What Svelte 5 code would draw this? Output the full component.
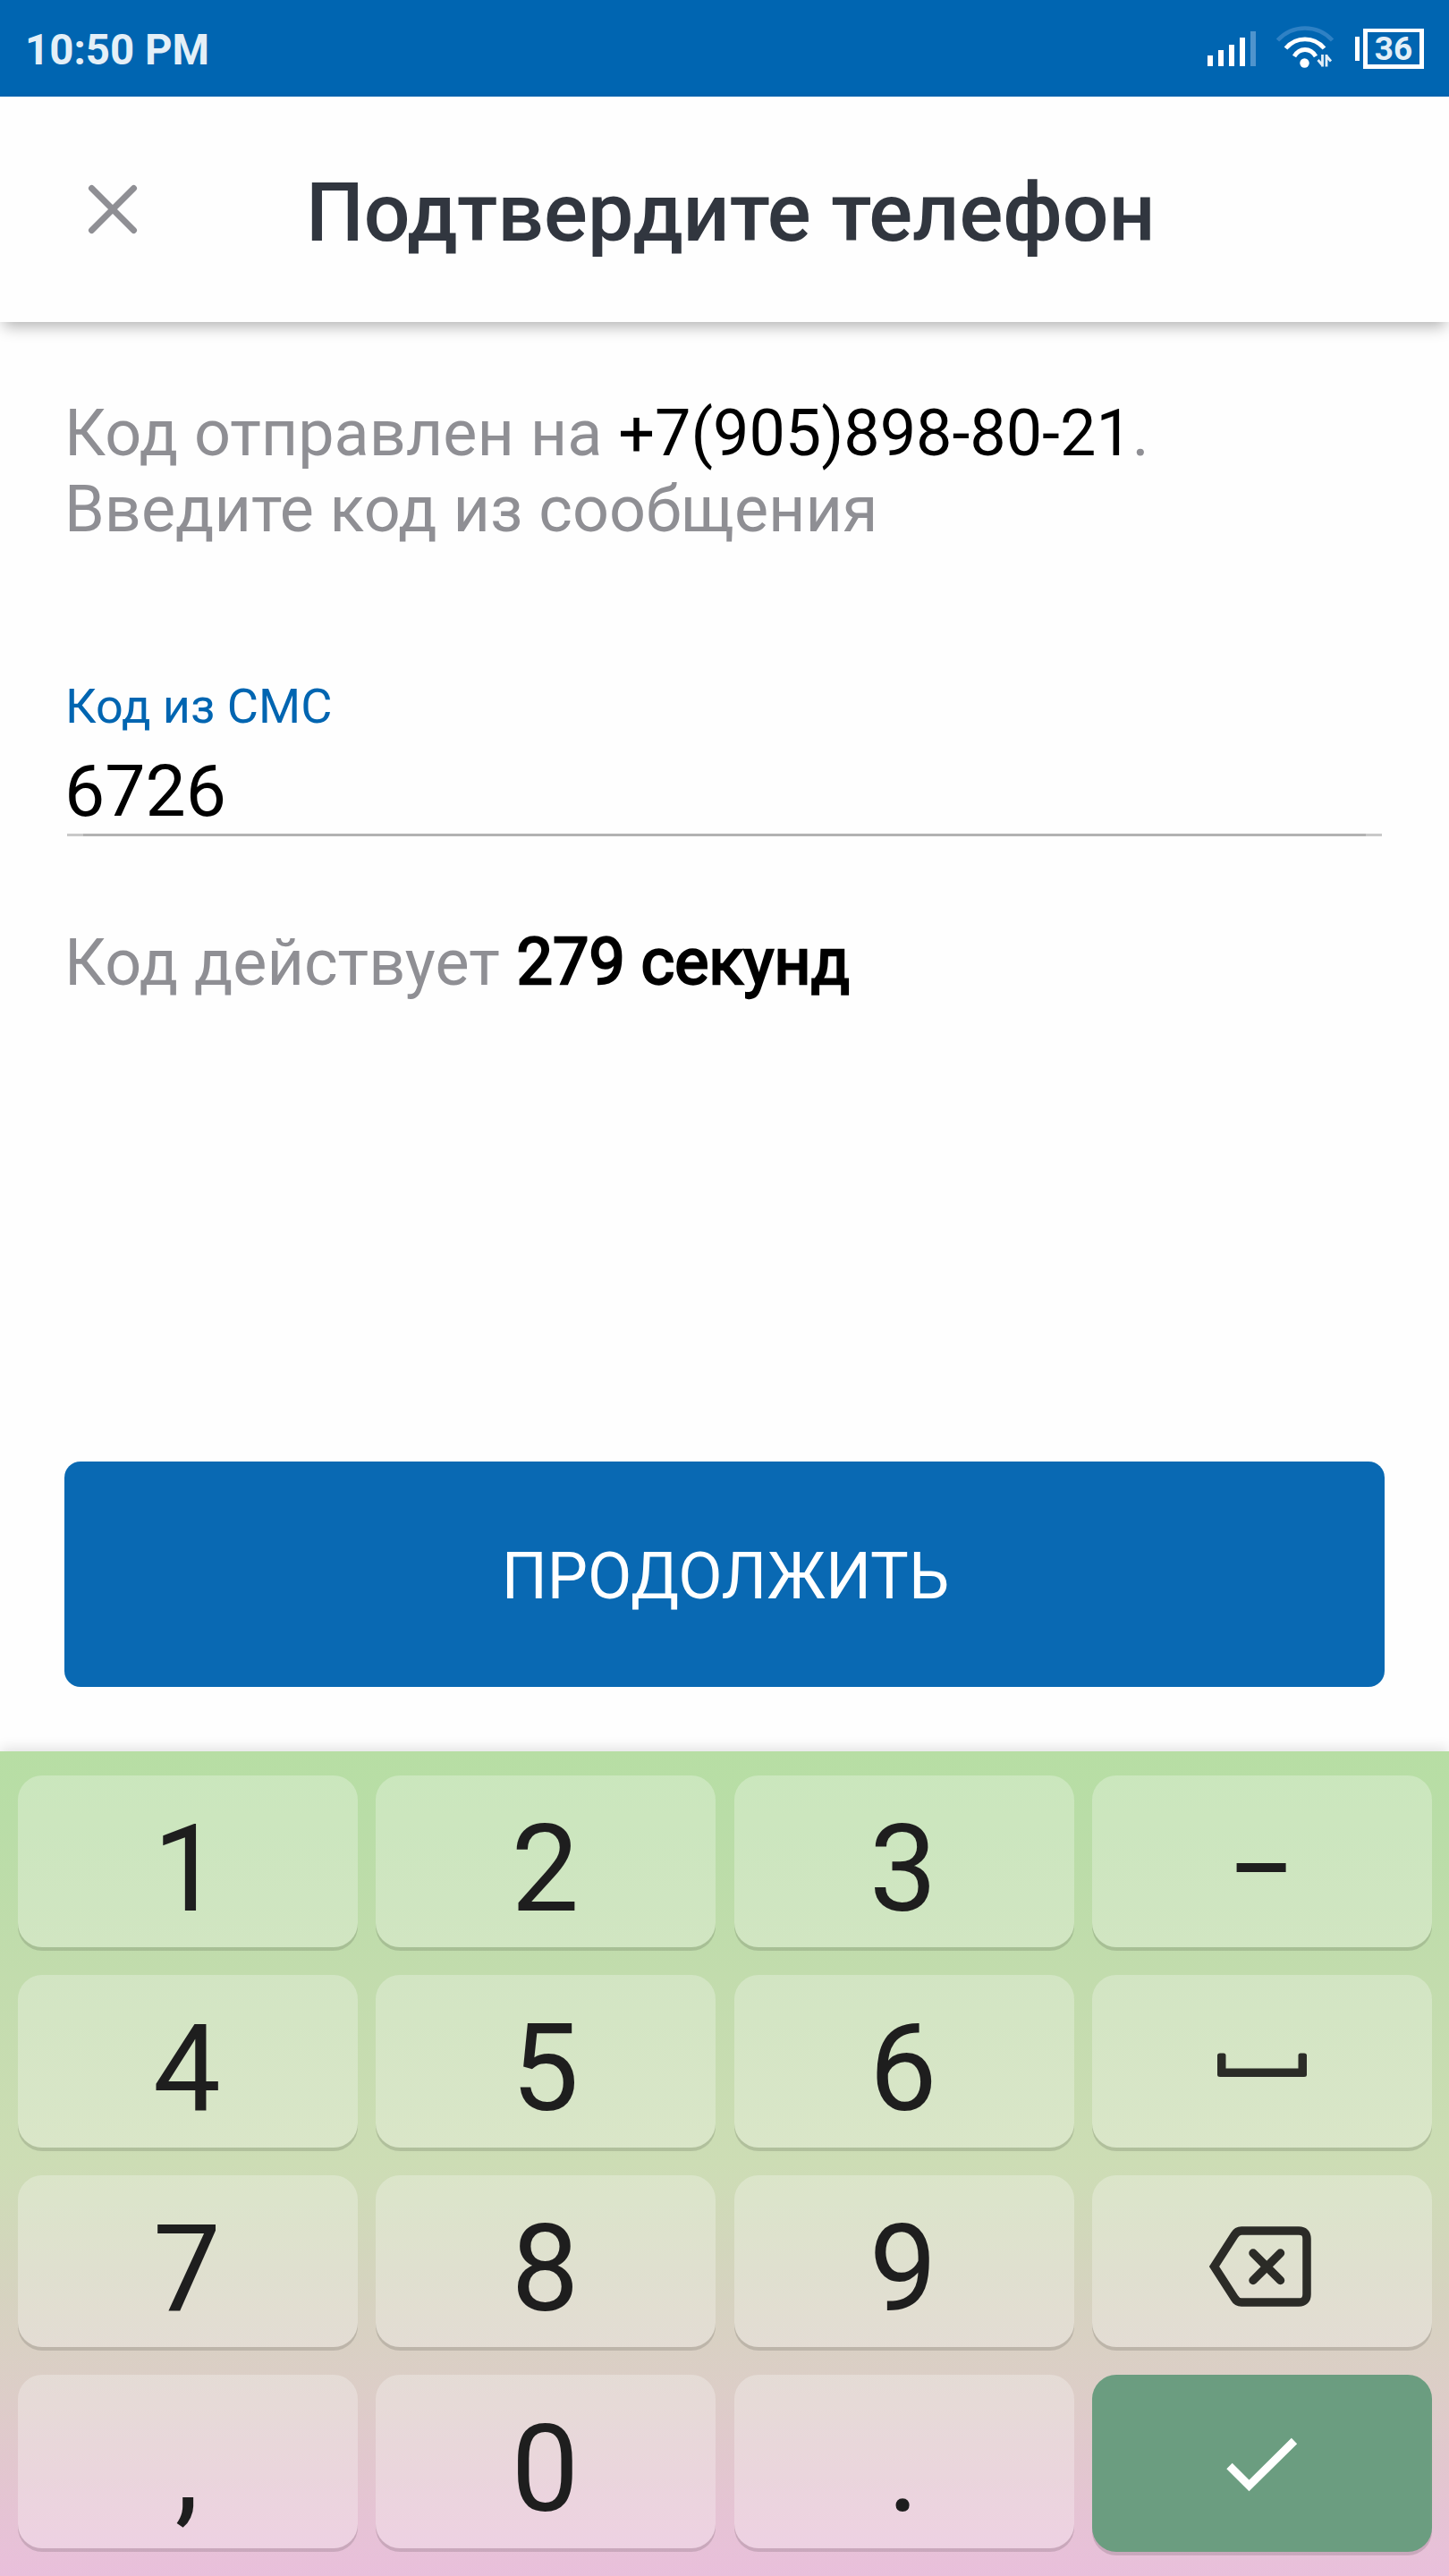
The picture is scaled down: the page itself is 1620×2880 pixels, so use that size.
<script>
  const phone = '+7(905)898-80-21';
  const code = '6726';
  const secondsLeft = 279;
  const keys = ['1', '2', '3', '−', '4', '5', '6', 'space', '7', '8', '9', 'delete', ',', '0', '.', 'done'];
</script>

<div class="screen">
  <div class="status">
    <span class="clock">10:50 PM</span>
    <div class="indicators">
      <svg class="signal" width="54" height="40" viewBox="0 0 54 40">
        <path fill="#fff" d="M0 27h6v12H0zM12 21h6v18h-6zM24 15h6v24h-6zM36 7h6v32h-6z" />
        <path fill="#4f94cd" d="M48 0h6v39h-6z" />
      </svg>
      <svg class="wifi" width="64" height="48" viewBox="0 0 64 48" fill="none">
        <path stroke="#2f81c4" stroke-width="4.5" d="M1.5 17C18 -1 46 -1 62.5 17" />
        <path stroke="#fff" stroke-width="4.8" d="M10.5 26C22 12.500 42 12.500 53.500 26" />
        <path stroke="#fff" stroke-width="4.8" d="M20 35C26 25 38 25 44 35" />
        <circle cx="31.500" cy="42.500" r="5.200" fill="#fff" />
        <path stroke="#e3eef7" stroke-width="2.800" d="M51.500 33v13.500M52 45.500l-5.500-6.500M56 46.500V33M55.500 34l5.500 6.500" />
      </svg>
      <div class="battery"><i></i><b>36</b></div>
    </div>
  </div>

  <header>
    <svg class="close" width="56" height="56" viewBox="0 0 56 56">
      <path d="M4.500 4.500 51.500 51.500M51.500 4.500 4.500 51.500" stroke="#8f8f94" stroke-width="7" stroke-linecap="round" />
    </svg>
    <h1>Подтвердите телефон</h1>
  </header>

  <main>
    <p class="info">Код отправлен на <span class="phone">{phone}</span>.<br />Введите код из сообщения</p>
    <div class="field">
      <div class="label">Код из СМС</div>
      <div class="value">{code}</div>
    </div>
    <p class="timer">Код действует <b>{secondsLeft} секунд</b></p>
    <button class="submit">ПРОДОЛЖИТЬ</button>
  </main>

  <div class="keyboard">
    {#each keys as key}
      <div class="key" class:done={key === 'done'}>
        {#if key === 'space'}
          <svg class="space" width="100" height="28" viewBox="0 0 100 28">
            <path d="M0 3Q0 .5 3 .5H7Q9.500 .5 9.500 3V17.500H90.500V3Q90.500 .5 93 .5H97Q100 .5 100 3V24.500Q100 27 97 27H3Q0 27 0 24.500Z" fill="#2b2c27" />
          </svg>
        {:else if key === 'delete'}
          <svg class="delete" width="114" height="90" viewBox="0 0 114 90" fill="none" stroke="#2b2b27" stroke-width="9.500">
            <path d="M5.500 45 28 10Q31 5 36 5H100Q109 5 109 14V76Q109 85 100 85H36Q31 85 28 80Z" />
            <path d="M49 30 79.500 60.500M79.500 30 49 60.500" stroke-linecap="round" />
          </svg>
        {:else if key === 'done'}
          <svg class="check" width="80" height="62" viewBox="0 0 80 62">
            <path d="M3.500 32 25.500 54 76 4" fill="none" stroke="#fff" stroke-width="9" />
          </svg>
        {:else}
          <span>{key}</span>
        {/if}
      </div>
    {/each}
  </div>
</div>

<style>
  :global(body) { background: #fefefe; }
  .screen {
    width: 1620px;
    height: 2880px;
    display: flex;
    flex-direction: column;
    overflow: hidden;
    background: #fefefe;
    font-family: Roboto, sans-serif;
  }
  .status {
    flex: none;
    box-sizing: border-box;
    height: 108px;
    padding: 0 28px;
    display: flex;
    align-items: center;
    justify-content: space-between;
    background: #0065b1;
  }
  .clock {
    font-size: 47.400px;
    font-weight: 700;
    color: #e4eff7;
    line-height: 56px;
    padding-top: 3px;
  }
  .indicators { display: flex; align-items: center; padding-top: 1px; }
  .signal { margin-right: 23px; }
  .wifi { margin-right: 24px; margin-top: -5px; }
  .battery { display: flex; align-items: center; gap: 4px; }
  .battery i { width: 5px; height: 27px; background: #fff; }
  .battery b {
    box-sizing: border-box;
    width: 68px;
    height: 45px;
    border: 5px solid #fff;
    border-top-width: 4px;
    color: #e4eff7;
    font-size: 37px;
    line-height: 38px;
    text-align: center;
  }
  header {
    flex: none;
    box-sizing: border-box;
    height: 252px;
    display: flex;
    align-items: center;
    padding: 0 98px;
    box-shadow: 0 9px 16px -4px rgba(0, 0, 0, 0.3);
  }
  h1 {
    margin: 8px 0 0 188px;
    font-size: 91.250px;
    font-weight: 500;
    line-height: 108px;
    color: #31363f;
    white-space: nowrap;
  }
  main {
    flex: 1;
    display: flex;
    flex-direction: column;
    padding: 82px 72px 72px;
  }
  p { margin: 0; font-size: 71.900px; line-height: 85px; color: #8f8f94; white-space: nowrap; }
  .phone { color: #000; }
  .field {
    margin: 132px 3px 0;
    height: 191px;
    box-sizing: border-box;
    padding-top: 14px;
    background: linear-gradient(90deg, #c9c9c9 18px, #b2b2b2 18px calc(100% - 18px), #c9c9c9 calc(100% - 18px)) bottom / 100% 3px no-repeat;
  }
  .label { font-size: 54px; line-height: 64px; color: #0065b1; margin-left: -2px; }
  .value { font-size: 80.500px; line-height: 95px; margin: 15px 0 0 -3px; }
  .timer { margin-top: 99px; }
  /* Regular advances with a thickened outline, as a synthetic bold draws it */
  .timer b {
    display: inline-block;
    font-weight: 400;
    color: #000;
    -webkit-text-stroke: 2.400px #000;
    transform: translate(1px, -1px);
  }
  .submit {
    margin-top: auto;
    height: 252px;
    padding: 6px 0 0 2px;
    border: 0;
    border-radius: 18px;
    background: #0969b3;
    color: #fff;
    font: 400 71.700px/86px Roboto, sans-serif;
  }
  .keyboard {
    flex: none;
    box-sizing: border-box;
    height: 922px;
    padding: 27px 19px 27px 20px;
    position: relative;
    display: grid;
    grid-template-columns: repeat(4, 1fr);
    grid-template-rows: 192px 193px 192px 194px;
    gap: 31px 20.500px;
    background: linear-gradient(#b7dea4 0%, #b9dda7 8%, #c2dcad 27%, #cdddb5 50%, #d6d3c0 66%, #dccec7 77%, #e3c6d0 88%, #e9bfdb 100%);
    box-shadow: 0 -3px 14px rgba(0, 0, 0, 0.12);
  }
  .key {
    display: flex;
    align-items: center;
    justify-content: center;
    border-radius: 27px;
    background: rgba(255, 255, 255, 0.27);
    box-shadow: 0 4px 0 rgba(0, 0, 0, 0.13);
    color: #1e1e1e;
    font-size: 135px;
    line-height: 158px;
  }
  .key span { padding: 17px 2px 0 0; }
  .done { background: #6b9d80; height: 198px; }
  .space { margin-top: 9px; }
  .check { margin-top: 3px; }
  .delete { margin-right: 4px; margin-top: 12px; }
</style>
